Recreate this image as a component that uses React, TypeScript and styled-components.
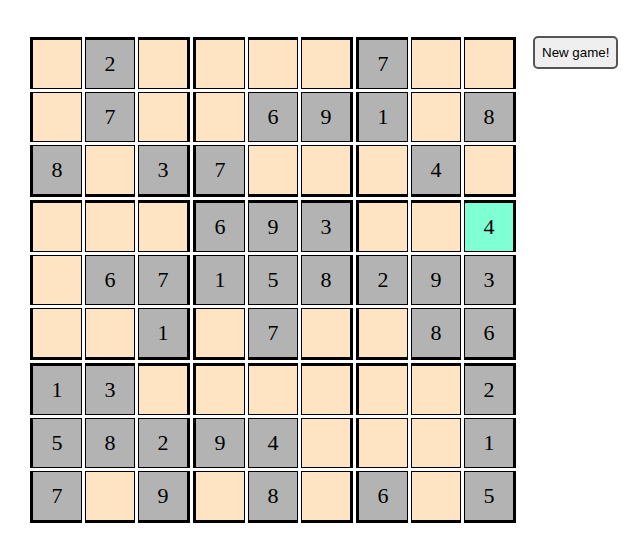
import React from "react";
import styled, { createGlobalStyle } from "styled-components";

const GlobalStyle = createGlobalStyle`
    body {
        margin: 0;
        background: #fff;
        font-family: "Liberation Serif", serif;
    }
`;

const Page = styled.div`
    display: flex;
    align-items: flex-start;
    gap: 17px;
    padding: 37px 0 0 30px;
`;

const Board = styled.div`
    display: grid;
    grid-template-columns: repeat(9, auto);
    gap: 3px;
`;

const Cell = styled.div<{ $given: boolean; $active: boolean; $row: number; $col: number }>`
    width: 48px;
    height: 48px;
    line-height: 48px;
    text-align: center;
    font-size: 22px;
    color: #000;
    border: 1px solid #000;
    border-left-width: ${p => (p.$col % 3 === 0 ? 3 : 1)}px;
    border-right-width: ${p => (p.$col % 3 === 2 ? 3 : 1)}px;
    border-top-width: ${p => (p.$row % 3 === 0 ? 3 : 1)}px;
    border-bottom-width: ${p => (p.$row % 3 === 2 ? 3 : 1)}px;
    background: ${p => (p.$active ? "#7fffd4" : p.$given ? "#b3b3b3" : "#ffe4c4")};
`;

const NewGame = styled.button`
    margin-top: -1px;
    padding: 7px 7px;
    font-family: "Liberation Sans", Arial, sans-serif;
    font-size: 13.33px;
    color: #000;
    background: #efefef;
    border: 2px solid #555;
    border-radius: 5px;
    cursor: pointer;
`;

const puzzle = [
    "_2____7__",
    "_7__691_8",
    "8_37___4_",
    "___693__4",
    "_67158293",
    "__1_7__86",
    "13______2",
    "58294___1",
    "7_9_8_6_5",
];

const App: React.FC = () => {
    return (
        <>
            <GlobalStyle />
            <Page>
                <Board>
                    {puzzle.map((line, r) =>
                        line.split("").map((ch, c) => {
                            const active = r === 3 && c === 8;
                            return (
                                <Cell
                                    key={`${r}-${c}`}
                                    $row={r}
                                    $col={c}
                                    $given={ch !== "_" && !active}
                                    $active={active}
                                >
                                    {ch === "_" ? "" : ch}
                                </Cell>
                            );
                        })
                    )}
                </Board>
                <NewGame>New game!</NewGame>
            </Page>
        </>
    );
};

export default App;
